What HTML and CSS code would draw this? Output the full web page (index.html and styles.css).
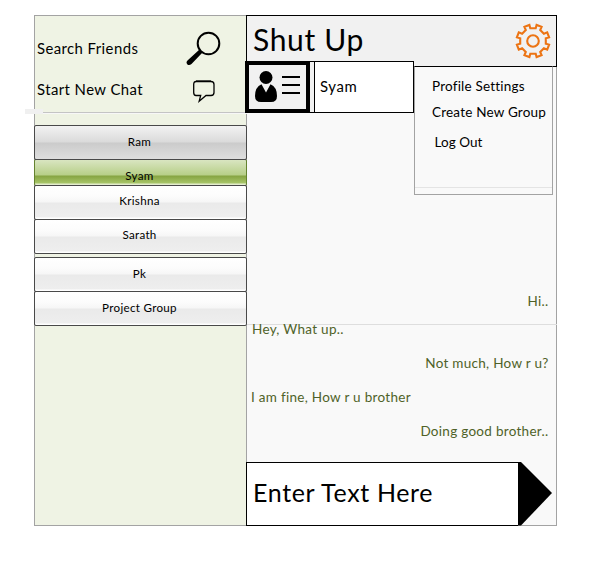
FILE: index.html
```html
<!DOCTYPE html>
<html lang="en">
<head>
<meta charset="utf-8">
<title>Shut Up</title>
<link rel="stylesheet" href="styles.css">
</head>
<body>
<div class="app">
  <aside class="sidebar">
    <div class="actions">
      <div class="action search"><span>Search Friends</span>
        <svg width="36" height="36" viewBox="0 0 36 36"><circle cx="22.5" cy="12.5" r="10.8" fill="none" stroke="#000" stroke-width="2"/><path d="M13.5 18.5 L16.5 21.5 L5.5 33 Q3 35 1.2 33.2 Q-.5 31 2 29 Z"/></svg>
      </div>
      <div class="action start"><span>Start New Chat</span>
        <svg width="22" height="23" viewBox="0 0 22 23"><path d="M3 1.5H18Q21 1.5 21 4.5V12.5Q21 15.5 18 15.5H13L6.2 21.2L7.7 15.5H3Q.7 15.5 .7 12.5V4.5Q.7 1.5 3 1.5Z" fill="none" stroke="#000" stroke-width="1.3"/><path d="M3 1.2H18" stroke="#000" stroke-width="1.6"/></svg>
      </div>
      <i class="divider"></i>
    </div>
    <nav class="contacts">
      <button class="contact pressed"><span>Ram</span></button>
      <button class="contact active"><span>Syam</span></button>
      <button class="contact raised"><span>Krishna</span></button>
      <button class="contact raised"><span>Sarath</span></button>
      <button class="contact spaced"><span>Pk</span></button>
      <button class="contact"><span>Project Group</span></button>
    </nav>
  </aside>
  <main class="chat">
    <header class="header">
      <h1>Shut Up</h1>
      <svg class="gear" width="36" height="36" viewBox="-18 -18 36 36" fill="none" stroke="#ec7414" stroke-width="2.1"><circle r="5.8"/><path d="M-2.7 -12.8L-3.6 -16.1L-8.6 -14.2L-7.2 -10.9L-10.9 -7.2L-14.2 -8.6L-16.1 -3.6L-12.8 -2.7L-12.8 2.7L-16.1 3.6L-14.2 8.6L-10.9 7.2L-7.2 10.9L-8.6 14.2L-3.6 16.1L-2.7 12.8L2.7 12.8L3.6 16.1L8.6 14.2L7.2 10.9L10.9 7.2L14.2 8.6L16.1 3.6L12.8 2.7L12.8 -2.7L16.1 -3.6L14.2 -8.6L10.9 -7.2L7.2 -10.9L8.6 -14.2L3.6 -16.1L2.7 -12.8Z"/></svg>
    </header>
    <div class="top-row">
      <div class="profile">
        <svg width="57" height="44" viewBox="0 0 57 44"><circle cx="17" cy="12.5" r="6.5"/><path d="M12.5 19.200L17 27.500L21.500 19.200Q28 22 28 31Q28 37 22 37H12Q6 37 6 31Q6 22 12.500 19.200Z"/><path d="M33 12H51M33 20H51M33 28H51" stroke="#000" stroke-width="2"/></svg>
      </div>
      <div class="peer"><span>Syam</span></div>
      <div class="menu">
        <a class="m1">Profile Settings</a>
        <a class="m2">Create New Group</a>
        <a class="m3">Log Out</a>
      </div>
    </div>
    <div class="messages">
      <p class="sent first"><span>Hi..</span></p>
      <p class="received second"><span>Hey, What up..</span></p>
      <p class="sent"><span>Not much, How r u?</span></p>
      <p class="received"><span>I am fine, How r u brother</span></p>
      <p class="sent"><span>Doing good brother..</span></p>
    </div>
    <div class="composer">
      <div class="entry"><span>Enter Text Here</span></div>
      <svg width="34" height="64" viewBox="0 0 34 64"><path d="M0 0H3L34 31L3 63.500H0Z"/></svg>
    </div>
  </main>
</div>
</body>
</html>
```
FILE: styles.css
```css
* { box-sizing: border-box; }
body { margin: 0; padding: 15px 0 0 34px; background: #fff; color: #000; font-family: Lato, sans-serif; }
svg { display: block; flex: none; }
span, a, h1 { white-space: nowrap; }
.app { display: grid; grid-template-columns: 212px 311px; height: 511px; }
.sidebar { background: #eff3e4; border: 1px solid #a3a3a3; border-right: 0; }
.actions { position: relative; height: 109px; margin-right: -1px; padding-left: 2px; }
.action { display: flex; justify-content: space-between; align-items: center; font-size: 14.9px; letter-spacing: .42px; }
.action span { padding-bottom: 3px; }
.search { height: 66px; padding-right: 25px; }
.start { height: 16px; padding-right: 32px; }
.start svg { margin-top: 2px; }
.divider { position: absolute; left: -10px; top: 93px; width: 222px; height: 5px; background: linear-gradient(#f0f0f0, #f0f0f0) 0 0 / 18px 5px no-repeat, linear-gradient(#c4c4c4 0 1px, #f7f7f7 1px 2px) 18px 3px / 204px 2px no-repeat; }
.contacts { display: flex; flex-direction: column; margin: 0 -1px; position: relative; z-index: 2; }
.contact { width: 213px; height: 35px; margin: 0 0 -1px; padding: 0 2px 2px 0; border: 1px solid #494949; border-radius: 2px; background: linear-gradient(#fff 0, #fcfcfc 10px, #f6f6f6 16px, #eaeaea 17px, #eee 31px, #fff 32px); color: #000; font: 11.6px Lato, sans-serif; letter-spacing: .3px; display: flex; align-items: center; justify-content: center; }
.contact.raised { padding-bottom: 4px; }
.contact.pressed { background: linear-gradient(#f2f2f2, #dadada 16px, #cbcbcb 17px, #dedede); }
.contact.active { height: 27px; padding: 6px 2px 0 0; border-color: #494949 #64822f; background: linear-gradient(#d9e5c1, #b7cf88 15px, #86a442 16px, #a7c568 23px, #e4edce 24px); }
.contact.spaced { margin-top: 4px; }
.chat { display: flex; flex-direction: column; background: #f9f9f9; border: 1px solid #a3a3a3; }
.header { display: flex; justify-content: space-between; align-items: center; height: 52px; margin: -1px -1px 0; padding: 0 5px 0 6px; flex: none; background: #f1f1f1; border: 1px solid #000; }
h1 { margin: 0; padding-bottom: 5px; font-size: 30px; font-weight: 400; letter-spacing: .65px; }
.top-row { display: flex; align-items: flex-start; position: relative; height: 134px; margin: -6px -1px 0; flex: none; }
.profile { width: 65px; height: 52px; margin-left: -1px; border: 4px solid #000; background: #f1f1f1; }
.peer { display: flex; align-items: center; width: 104px; height: 52px; padding: 0 0 2px 10px; background: #fff; border: 1px solid #000; border-left: 0; box-shadow: inset 4px 0 #f1f1f1, inset 5px 0 #000; font-size: 14.9px; letter-spacing: .6px; }
.menu { display: flex; flex-direction: column; width: 139px; height: 129px; margin-top: 5px; padding: 11px 0 0 17px; border: 1px solid #a3a3a3; border-top-color: #000; background: linear-gradient(#e4e4e4, #e4e4e4) 0 120px / 100% 1px no-repeat; font-size: 13.5px; line-height: 16px; letter-spacing: .2px; }
.m2 { margin-top: 10px; }
.m3 { margin: 14px 0 0 2.5px; letter-spacing: .05px; }
.messages { flex: 1; margin: 0 -1px; padding-top: 98px; color: #4f6228; font-size: 13.5px; line-height: 16px; letter-spacing: .29px; }
.messages p { display: flex; margin: 0 0 18px; padding: 0 8.5px 0 5px; }
.messages .first { margin-bottom: 0; height: 31px; }
.messages .second { padding: 0 0 0 6px; border-top: 1px solid #dedede; height: 13px; align-items: flex-end; margin-bottom: 18px; }
.messages .sent { justify-content: flex-end; }
.composer { display: flex; flex: none; height: 64px; margin: 0 -1px -1px; }
.entry { display: flex; align-items: center; width: 272px; height: 64px; padding: 0 0 4px 6px; background: #fff; border: 1px solid #000; border-right: 0; font-size: 25px; letter-spacing: .65px; }
```
